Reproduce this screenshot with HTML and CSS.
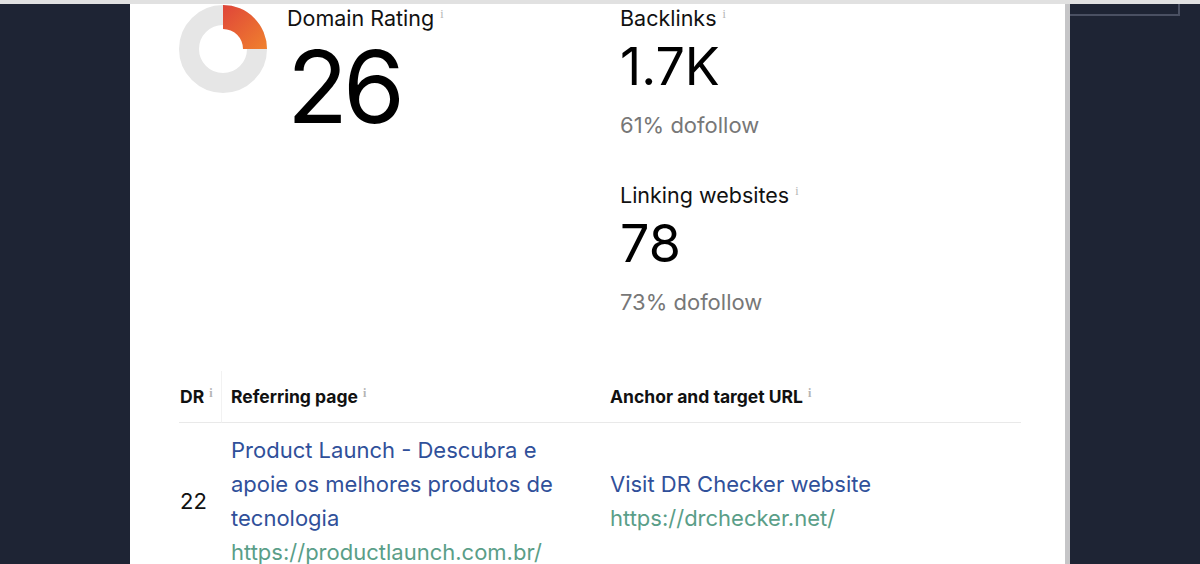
FILE: index.html
```html
<!DOCTYPE html>
<html>
<head>
<meta charset="utf-8">
<link rel="stylesheet" href="styles.css">
</head>
<body>
<div class="topbar"></div>
<div class="stage">
  <div class="gutter"></div>
  <main class="panel">
    <section class="stats">
      <div class="dr">
        <svg class="donut" width="88" height="88" viewBox="0 0 88 88">
          <defs>
            <linearGradient id="g" x1="0" y1="0" x2="1" y2="1">
              <stop offset="0" stop-color="#df4539"/>
              <stop offset="1" stop-color="#f0812e"/>
            </linearGradient>
          </defs>
          <circle cx="44" cy="44" r="34" fill="none" stroke="#e6e6e6" stroke-width="20"/>
          <path d="M44 0 A44 44 0 0 1 88 44 L64 44 A20 20 0 0 0 44 24 Z" fill="url(#g)"/>
        </svg>
        <div class="dr-text">
          <div class="label">Domain Rating<span class="info">i</span></div>
          <div class="big">26</div>
        </div>
      </div>
      <div class="metrics">
        <div class="metric">
          <div class="label">Backlinks<span class="info">i</span></div>
          <div class="num">1.7K</div>
          <div class="sub">61% dofollow</div>
        </div>
        <div class="metric">
          <div class="label">Linking websites<span class="info">i</span></div>
          <div class="num">78</div>
          <div class="sub">73% dofollow</div>
        </div>
      </div>
    </section>
    <section class="table">
      <div class="th th-dr">DR<span class="info">i</span></div>
      <div class="th th-ref">Referring page<span class="info">i</span></div>
      <div class="th th-anchor">Anchor and target URL<span class="info">i</span></div>
      <div class="td td-dr">22</div>
      <div class="td td-ref">
        <a class="link">Product Launch - Descubra e apoie os melhores produtos de tecnologia</a>
        <span class="url">https://productlaunch.com.br/</span>
      </div>
      <div class="td td-anchor">
        <a class="link">Visit DR Checker website</a>
        <span class="url">https://drchecker.net/</span>
      </div>
    </section>
  </main>
  <div class="scrollbar"></div>
  <div class="side"><div class="frame"></div></div>
</div>
</body>
</html>
```
FILE: styles.css
```css
* { box-sizing: border-box; }
html, body {
  margin: 0;
  height: 564px;
  overflow: hidden;
  background: #1e2434;
  font-family: Inter, "Liberation Sans", sans-serif;
  color: #111;
}
.topbar {
  height: 4px;
  background: #e1e1e1;
}
.stage {
  display: flex;
  height: 560px;
}
.gutter {
  width: 130px;
  flex: none;
}
.panel {
  width: 935px;
  flex: none;
  background: #fff;
  padding: 0 44px 0 49px;
}
.scrollbar {
  width: 5px;
  flex: none;
  background: #c5c5c7;
}
.side {
  flex: 1;
}
.frame {
  width: 110px;
  height: 12px;
  border-right: 2px solid #4a5062;
  border-bottom: 2px solid #4a5062;
}
.stats {
  display: grid;
  grid-template-columns: 441px 1fr;
}
.dr {
  display: flex;
  gap: 20px;
  align-items: flex-start;
}
.donut {
  margin-top: 1px;
  display: block;
}
.label {
  font-size: 21.5px;
  line-height: 28px;
  color: #111;
}
.info {
  font-family: "Liberation Serif", serif;
  font-size: 12px;
  color: #b4b4b4;
  vertical-align: 8px;
  line-height: 0;
  margin-left: 6px;
}
.big {
  font-size: 100px;
  line-height: 110px;
  color: #000;
  letter-spacing: -5px;
}
.metric + .metric {
  margin-top: 42px;
}
.num {
  font-size: 52px;
  line-height: 60px;
  margin-top: 5px;
  color: #000;
}
.sub {
  font-size: 22px;
  line-height: 28px;
  margin-top: 14px;
  color: #777;
}
.table {
  margin-top: 55px;
  display: grid;
  grid-template-columns: 43px 354px 1fr;
}
.th {
  font-weight: 700;
  font-size: 17.5px;
  line-height: 24px;
  padding: 14px 0 13px;
  border-bottom: 1px solid #e9e9e9;
  color: #111;
}
.th .info { vertical-align: 6px; margin-left: 5px; }
.th-dr {
  padding-left: 1px;
  border-right: 1px solid #f2f2f2;
}
.th-ref { padding-left: 9px; }
.th-anchor { padding-left: 34px; }
.td {
  font-size: 22px;
  line-height: 34px;
  padding-top: 10px;
  display: flex;
  flex-direction: column;
  justify-content: center;
}
.td-dr { padding-left: 1px; color: #111; }
.td-ref { padding-left: 9px; }
.td-anchor { padding-left: 34px; }
.link { color: #30509a; }
.url { color: #5a9e88; }
```
